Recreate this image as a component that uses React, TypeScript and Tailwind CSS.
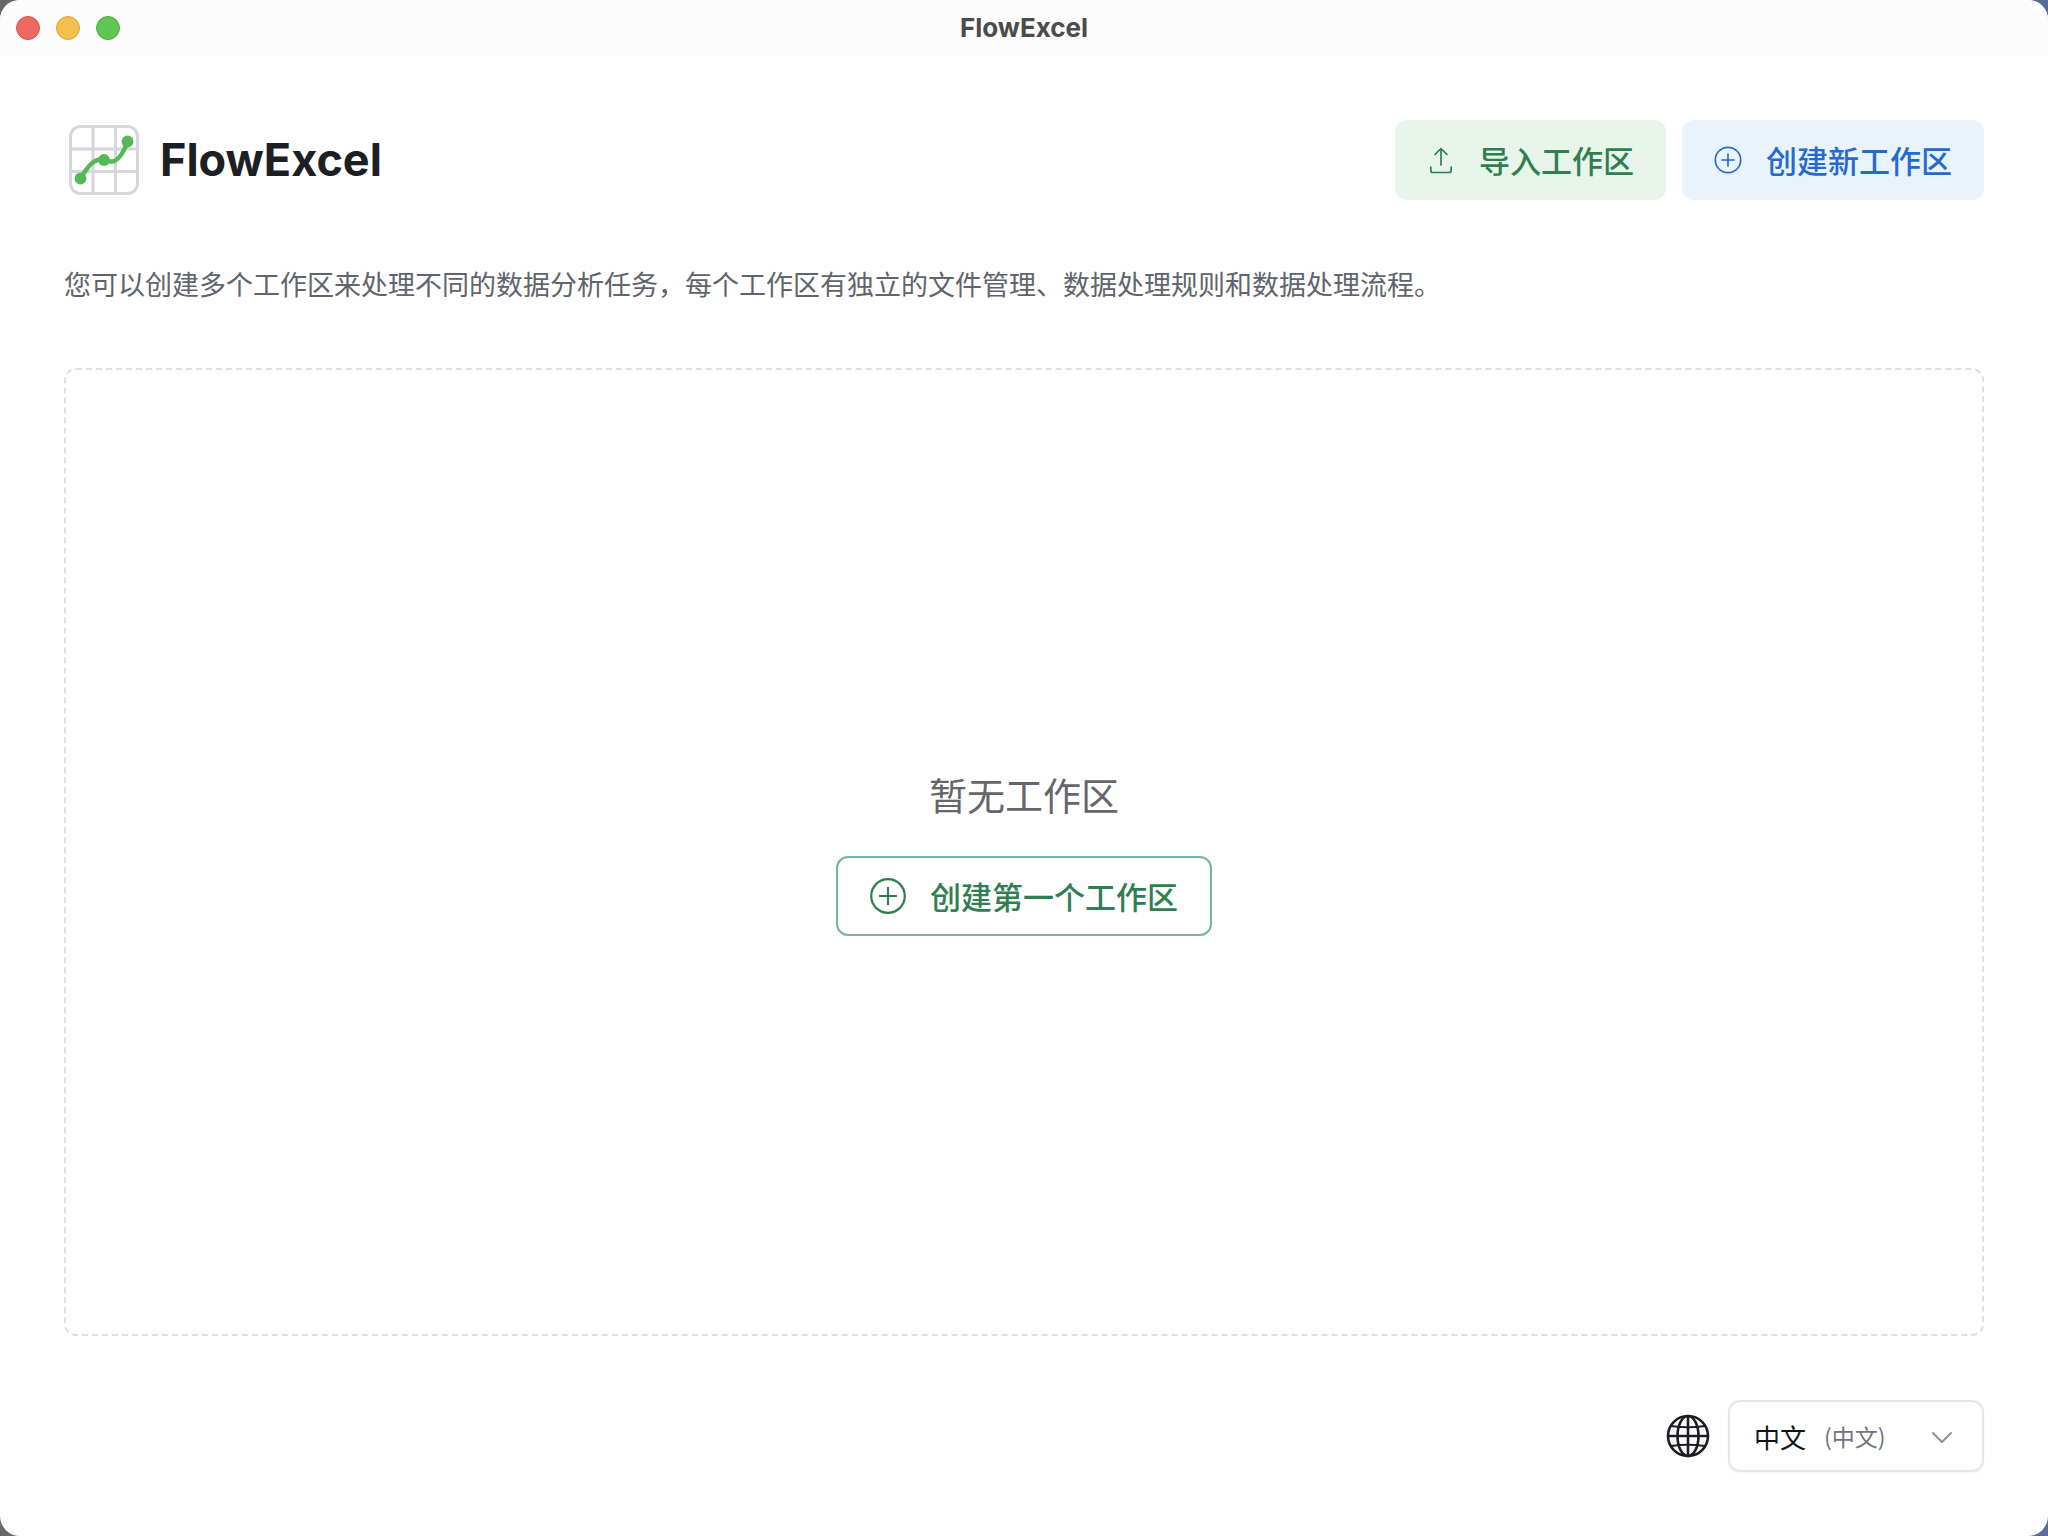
import React from "react";

const latinFont = "font-['Inter','Noto_Sans_CJK_SC',sans-serif]";
const cjkFont = "font-['Noto_Sans_CJK_SC',sans-serif]";

function Logo() {
  return (
    <svg width="80" height="80" viewBox="0 0 80 80" fill="none" aria-hidden="true">
      <g stroke="#d6d6db" strokeWidth="3">
        <rect x="6.5" y="6.5" width="67" height="67" rx="10" />
        <path d="M29 6.5v67M51.5 6.5v67M6.5 29h67M6.5 51.5h67" />
      </g>
      <path
        d="M17 58C22 49 29 40 36 39.500C42 39.500 42 42 48 41.500C55 41 60 31 63.500 22"
        stroke="#56b957"
        strokeWidth="4.500"
      />
      <g fill="#56b957">
        <circle cx="16.500" cy="58.500" r="5.900" />
        <circle cx="40" cy="40" r="5.900" />
        <circle cx="63.500" cy="21.500" r="5.900" />
      </g>
    </svg>
  );
}

function PlusCircleSmall() {
  return (
    <svg className="size-7" viewBox="0 0 28 28" fill="none" stroke="currentColor" strokeWidth="1.700" strokeLinecap="round" aria-hidden="true">
      <circle cx="14" cy="14" r="12.700" />
      <path d="M14 8v12M8 14h12" />
    </svg>
  );
}

function PlusCircleLarge() {
  return (
    <svg className="size-9" viewBox="0 0 36 36" fill="none" stroke="currentColor" strokeWidth="2.200" strokeLinecap="round" aria-hidden="true">
      <circle cx="18" cy="18" r="16.800" />
      <path d="M18 9.800v16.400M9.800 18h16.400" />
    </svg>
  );
}

function UploadIcon() {
  return (
    <svg className="size-7" viewBox="0 0 28 28" fill="none" stroke="currentColor" strokeWidth="1.700" strokeLinecap="round" strokeLinejoin="round" aria-hidden="true">
      <path d="M14 19V2.500M8 8.500l6-6 6 6M3.800 21v3.500a2 2 0 0 0 2 2h16.400a2 2 0 0 0 2-2V21" />
    </svg>
  );
}

function Globe() {
  return (
    <svg className="size-11" viewBox="0 0 44 44" fill="none" stroke="#1b1d22" strokeWidth="2.600" aria-hidden="true">
      <circle cx="22" cy="22" r="20" />
      <ellipse cx="22" cy="22" rx="10.500" ry="20" />
      <path d="M22 2v40M2 22h40" />
      <path d="M5 12Q22 14.500 39 12M5 32Q22 29.500 39 32" strokeWidth="2.200" />
    </svg>
  );
}

export default function App() {
  return (
    <div className="bg-[linear-gradient(90deg,#6b6468,#5b6c98)]">
      <div className={`flex min-h-screen flex-col overflow-hidden rounded-[20px] bg-[#fefefe] ${latinFont}`}>
        <div className="grid h-14 grid-cols-[1fr_auto_1fr] items-center bg-[#fcfcfc] px-4">
          <div className="flex gap-4">
            <button aria-label="关闭" className="size-6 rounded-full border border-[#d9544c] bg-[#ec6a5f]" />
            <button aria-label="最小化" className="size-6 rounded-full border border-[#dba73c] bg-[#f5bf4f]" />
            <button aria-label="最大化" className="size-6 rounded-full border border-[#4cac3f] bg-[#61c554]" />
          </div>
          <span className="text-[26px] leading-8 font-bold text-[#4b4b4b]">FlowExcel</span>
        </div>

        <main className="flex flex-1 flex-col gap-16 p-16">
          <header className="flex items-center justify-between">
            <div className="flex items-center gap-4">
              <Logo />
              <h1 className="text-[45px] leading-[56px] font-bold text-[#1c2024]">FlowExcel</h1>
            </div>
            <div className="flex gap-4">
              <button className={`flex h-20 items-center gap-6 rounded-xl bg-[#e8f5eb] px-8 text-[31px] font-medium text-[#2f7f52] ${cjkFont}`}>
                <UploadIcon />
                导入工作区
              </button>
              <button className={`flex h-20 items-center gap-6 rounded-xl bg-[#e8f3fc] px-8 text-[31px] font-medium text-[#256bce] ${cjkFont}`}>
                <PlusCircleSmall />
                创建新工作区
              </button>
            </div>
          </header>

          <p className={`text-[27px] leading-10 text-[#60646c] ${cjkFont}`}>
            您可以创建多个工作区来处理不同的数据分析任务，每个工作区有独立的文件管理、数据处理规则和数据处理流程。
          </p>

          <section className="flex flex-1 flex-col items-center justify-center gap-8 rounded-xl border-2 border-dashed border-[#dfe0e3]">
            <p className="text-[38px] leading-[56px] text-[#65656c]">暂无工作区</p>
            <button className={`flex h-20 items-center gap-6 rounded-xl border-2 border-[#78b596] px-8 text-[31px] font-medium text-[#2f7f52] ${cjkFont}`}>
              <PlusCircleLarge />
              创建第一个工作区
            </button>
          </section>

          <footer className="flex items-center justify-end gap-[18px]">
            <Globe />
            <div className={`relative ${cjkFont}`}>
              <select aria-label="语言" className="h-[72px] w-64 appearance-none rounded-xl border-2 border-[#e5e7eb] bg-white pl-6 text-[26px] text-[#111318] shadow-xs">
                <option>中文</option>
                <option>English</option>
              </select>
              <div className="pointer-events-none absolute inset-y-0 right-[30px] left-24 flex items-center justify-between">
                <span className="text-[23px] text-[#6f7480]">(中文)</span>
                <svg className="size-6" viewBox="0 0 24 24" fill="none" stroke="#8f8f94" strokeWidth="2" strokeLinecap="round" strokeLinejoin="round" aria-hidden="true">
                  <path d="M3 9l9 9 9-9" />
                </svg>
              </div>
            </div>
          </footer>
        </main>
      </div>
    </div>
  );
}
